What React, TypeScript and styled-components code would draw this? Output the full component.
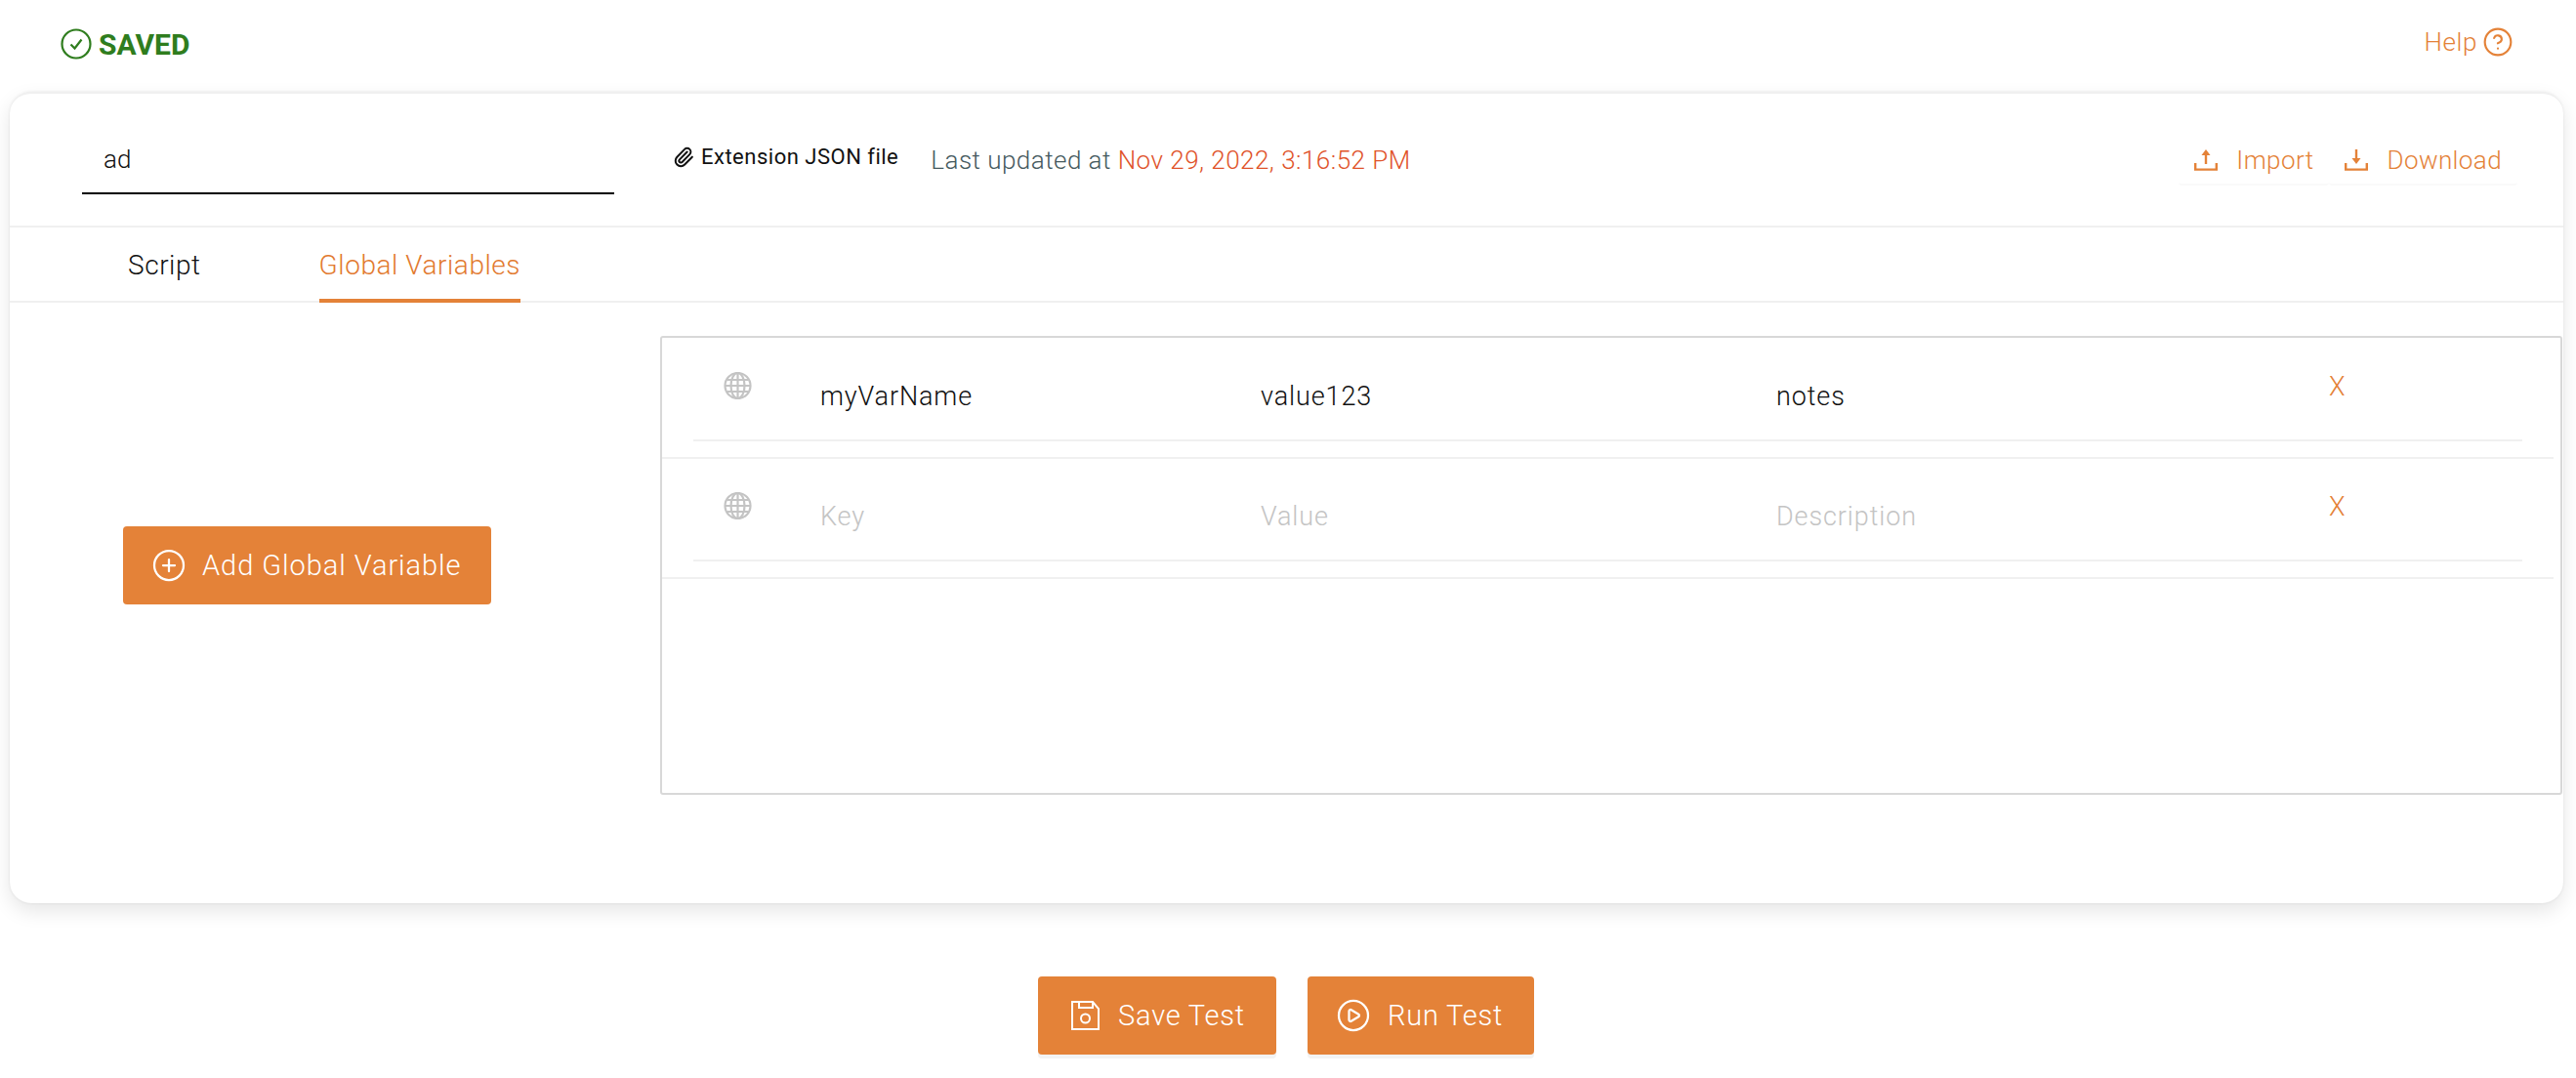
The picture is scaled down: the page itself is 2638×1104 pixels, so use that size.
import React from "react";
import styled, { createGlobalStyle } from "styled-components";
import { CirclePlay, CirclePlus, CircleHelp, Paperclip } from "lucide-react";

const ORANGE = "#e48238";

const Global = createGlobalStyle`
  html, body {
    margin: 0;
    padding: 0;
    background: #fff;
    font-family: Roboto, "Liberation Sans", sans-serif;
  }
  * { box-sizing: border-box; }
`;

const Page = styled.div`
  width: 2638px;
  height: 1104px;
  overflow: hidden;
`;

const TopBar = styled.div`
  height: 94px;
  padding: 29px 64px 0 62px;
  display: flex;
  justify-content: space-between;
  align-items: flex-start;
`;

const Saved = styled.div`
  display: flex;
  align-items: center;
  gap: 7px;
  height: 32px;
  color: #2f7d1e;
  font-size: 30px;
  font-weight: 700;
`;

const Help = styled.div`
  display: flex;
  align-items: center;
  gap: 5px;
  height: 28px;
  color: ${ORANGE};
  font-size: 26px;
  font-weight: 300;
  letter-spacing: 0.6px;
`;

const Card = styled.div`
  margin: 0 13px 0 10px;
  height: 831px;
  background: #fff;
  border-radius: 22px;
  border-top: 2px solid #f0f0f0;
  box-shadow: 0 8px 20px rgba(0, 0, 0, 0.1), 0 0 3px rgba(0, 0, 0, 0.08);
  display: flex;
  flex-direction: column;
`;

const Header = styled.div`
  height: 137px;
  border-bottom: 2px solid #f0f0f0;
  display: flex;
  align-items: flex-start;
  padding: 0 47px 0 74px;
`;

const NameInput = styled.input`
  width: 545px;
  height: 103px;
  padding: 35px 22px 2px;
  border: none;
  border-bottom: 2px solid #000;
  outline: none;
  background: none;
  color: #111;
  font: 300 26px Roboto, sans-serif;
`;

const FileLabel = styled.div`
  margin: 52px 0 0 60px;
  display: flex;
  align-items: center;
  gap: 7px;
  color: #111;
  font-size: 22px;
  font-weight: 400;
  letter-spacing: 0.5px;
`;

const Updated = styled.div`
  margin: 53px 0 0 33px;
  color: #465a60;
  font-size: 26px;
  font-weight: 300;
  letter-spacing: 0.47px;
`;

const DateText = styled.span`
  color: #e0532a;
`;

const Tools = styled.div`
  margin-left: auto;
  margin-top: 47px;
  display: flex;
`;

const ToolButton = styled.div`
  height: 47px;
  padding: 0 16px 4px;
  display: flex;
  align-items: center;
  gap: 19px;
  color: ${ORANGE};
  font-size: 26px;
  font-weight: 300;
  letter-spacing: 0.4px;
  border-bottom: 2px solid #fafafa;
  border-radius: 3px;
`;

const Tabs = styled.div`
  height: 77px;
  border-bottom: 2px solid #f0f0f0;
  padding-left: 121px;
  display: flex;
  gap: 121px;
`;

const Tab = styled.div<{ $active?: boolean }>`
  height: 77px;
  padding-top: 22px;
  font-size: 28px;
  font-weight: 300;
  letter-spacing: 0.55px;
  color: ${(props) => (props.$active ? "#e27a30" : "#111")};
  border-bottom: ${(props) => (props.$active ? `4px solid ${ORANGE}` : "none")};
`;

const Body = styled.div`
  flex: 1;
  display: flex;
  align-items: flex-start;
  padding: 34px 1px 0 0;
`;

const LeftCol = styled.div`
  width: 666px;
  height: 470px;
  flex: none;
  padding-left: 116px;
  display: flex;
  align-items: center;
`;

const OrangeButton = styled.div<{ $width: number }>`
  width: ${(props) => props.$width}px;
  height: 80px;
  background: ${ORANGE};
  color: #fff;
  border-radius: 4px;
  display: flex;
  align-items: center;
  padding-left: 29px;
  gap: 16px;
  font-size: 29px;
  font-weight: 300;
  letter-spacing: 0.95px;
`;

const VarBox = styled.div`
  flex: 1;
  height: 470px;
  border: 2px solid #d8d8d8;
  border-radius: 3px;
  padding: 1px 7px 0 0;
`;

const VarRow = styled.div`
  padding: 0 32px 16px;
  border-bottom: 2px solid #f0f0f0;
`;

const VarGrid = styled.div`
  height: 105px;
  border-bottom: 2px solid #f0f0f0;
  display: grid;
  grid-template-columns: 130px 451px 528px 567px 1fr;
  align-items: start;
`;

const GlobeCell = styled.div`
  padding: 34px 0 0 31px;
  display: flex;
`;

const Field = styled.input`
  width: 100%;
  margin-top: 41px;
  padding: 0;
  border: none;
  outline: none;
  background: none;
  color: #111;
  font: 300 27px/36px Roboto, sans-serif;
  letter-spacing: 0.9px;
  &::placeholder {
    color: #c4c4c4;
    opacity: 1;
  }
`;

const Remove = styled.div`
  margin: 33px 0 0 -1px;
  color: ${ORANGE};
  font-size: 27px;
  font-weight: 300;
  line-height: 32px;
`;

const Actions = styled.div`
  margin: 75px 14px 0 10px;
  display: flex;
  justify-content: center;
  gap: 32px;
`;

const ActionButton = styled(OrangeButton)<{ $pad: number; $gap: number }>`
  box-shadow: 0 4px 0 #f3f3f3;
  padding-left: ${(props) => props.$pad}px;
  gap: ${(props) => props.$gap}px;
  letter-spacing: 0.8px;
`;

const SavedIcon = () => (
  <svg width="32" height="32" viewBox="0 0 32 32" fill="none" stroke="#2f7d1e" strokeWidth="2.2">
    <circle cx="16" cy="16" r="14.5" />
    <path d="M10.5 16.5l4 4 7-9" />
  </svg>
);

const TrayIcon = ({ down }: { down?: boolean }) => (
  <svg width="24" height="22" viewBox="0 0 24 22" fill="none" stroke={ORANGE} strokeWidth="2.4">
    <path d="M1.2 14v6.6h21.6V14" />
    {down ? <path d="M12 0v12" /> : <path d="M12 4v11" />}
    {down ? (
      <path d="M7.5 9h9L12 15z" fill={ORANGE} stroke="none" />
    ) : (
      <path d="M7.5 6h9L12 0z" fill={ORANGE} stroke="none" />
    )}
  </svg>
);

const GlobeIcon = () => (
  <svg width="29" height="28" viewBox="0 0 29 28" fill="none" stroke="#c4c4c4" strokeWidth="2.2">
    <circle cx="14.5" cy="14" r="13" />
    <ellipse cx="14.5" cy="14" rx="7" ry="13" />
    <path d="M14.5 1v26M1.5 14h26M3.5 8h22M3.5 20h22" />
  </svg>
);

const SaveIcon = () => (
  <svg width="29" height="30" viewBox="0 0 29 30" fill="none" stroke="#fff" strokeWidth="2">
    <path d="M1 1h21l6 7v21H1z" />
    <path d="M8 1v6h14V1" />
    <circle cx="14.5" cy="18" r="4.5" />
  </svg>
);

const rows = [
  { key: "myVarName", value: "value123", description: "notes" },
  { key: "", value: "", description: "" },
];

const App = () => {
  return (
    <Page>
      <Global />
      <TopBar>
        <Saved>
          <SavedIcon />
          SAVED
        </Saved>
        <Help>
          Help
          <CircleHelp size={32} strokeWidth={1.6} />
        </Help>
      </TopBar>
      <Card>
        <Header>
          <NameInput defaultValue="ad" />
          <FileLabel>
            <Paperclip size={22} strokeWidth={2.2} />
            Extension JSON file
          </FileLabel>
          <Updated>
            Last updated at <DateText>Nov 29, 2022, 3:16:52 PM</DateText>
          </Updated>
          <Tools>
            <ToolButton>
              <TrayIcon />
              Import
            </ToolButton>
            <ToolButton>
              <TrayIcon down />
              Download
            </ToolButton>
          </Tools>
        </Header>
        <Tabs>
          <Tab>Script</Tab>
          <Tab $active>Global Variables</Tab>
        </Tabs>
        <Body>
          <LeftCol>
            <OrangeButton $width={377}>
              <CirclePlus size={36} strokeWidth={1.5} />
              Add Global Variable
            </OrangeButton>
          </LeftCol>
          <VarBox>
            {rows.map((row, i) => (
              <VarRow key={i}>
                <VarGrid>
                  <GlobeCell>
                    <GlobeIcon />
                  </GlobeCell>
                  <Field defaultValue={row.key} placeholder="Key" />
                  <Field defaultValue={row.value} placeholder="Value" />
                  <Field defaultValue={row.description} placeholder="Description" />
                  <Remove>X</Remove>
                </VarGrid>
              </VarRow>
            ))}
          </VarBox>
        </Body>
      </Card>
      <Actions>
        <ActionButton $width={244} $pad={34} $gap={19}>
          <SaveIcon />
          Save Test
        </ActionButton>
        <ActionButton $width={232} $pad={29} $gap={17}>
          <CirclePlay size={36} strokeWidth={1.5} />
          Run Test
        </ActionButton>
      </Actions>
    </Page>
  );
};

export default App;
